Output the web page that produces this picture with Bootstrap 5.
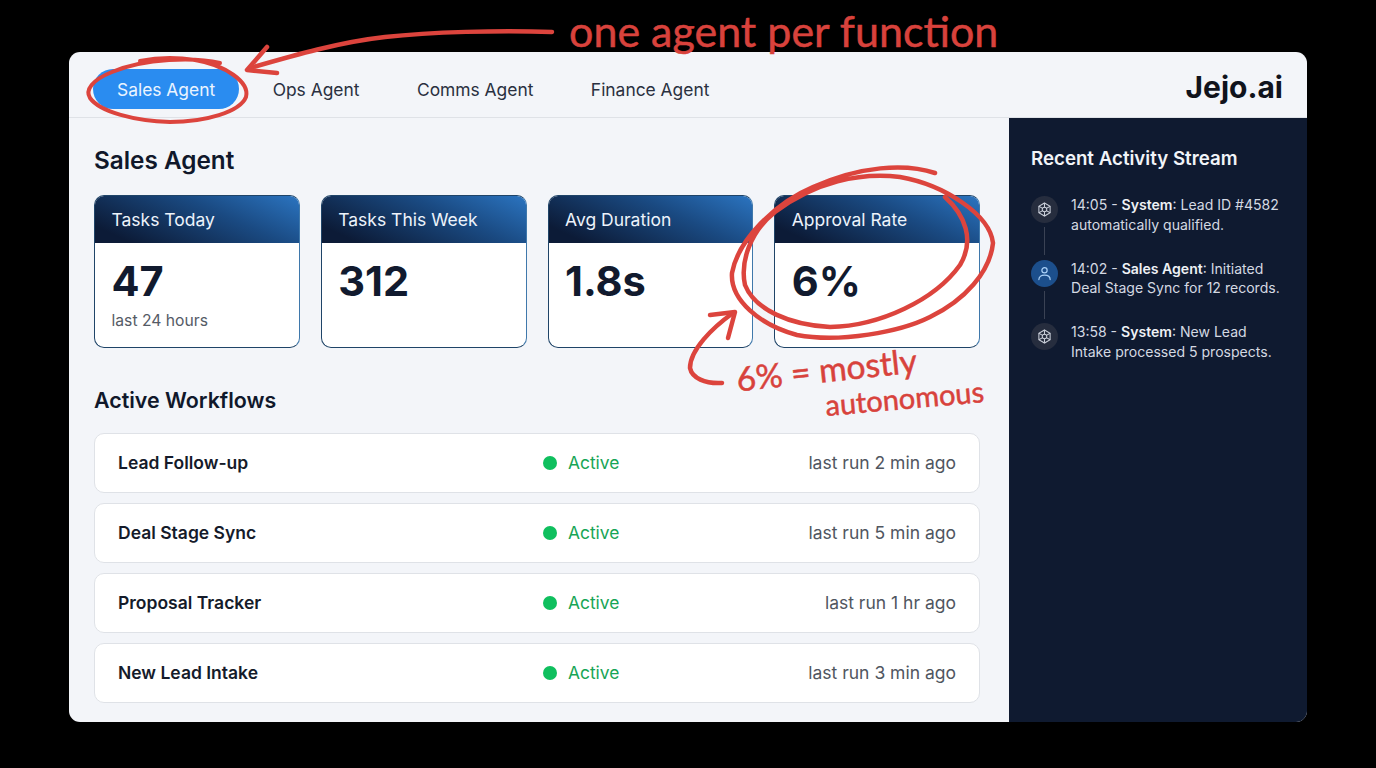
<!DOCTYPE html>
<html lang="en">
<head>
  <meta charset="UTF-8">
  <meta name="viewport" content="width=device-width, initial-scale=1">
  <title>Jejo.ai</title>
  <link href="https://cdn.jsdelivr.net/npm/bootstrap@5.3.0/dist/css/bootstrap.min.css" rel="stylesheet">
  <style>
    html, body { height: 768px; overflow: hidden; }
    body { background: #000; font-family: Inter, "Liberation Sans", sans-serif; color: #10182b; position: relative; }

    .app-panel { margin: 52px 69px 0; width: 1238px; height: 670px; background: #f3f5f9; border-radius: 11px; overflow: hidden; }
    .app-top { height: 66px; padding: 17px 24px 0; border-bottom: 1px solid #dfe2e7; }
    .app-top .nav { gap: 9.5px; }
    .app-top .nav-link { height: 40px; padding: 0 24px; line-height: 41px; font-size: 17.4px; color: #2a3040; border-radius: 20px; }
    .app-top .nav-link.active { background: #2a8cf0; color: #eaf4ff; }
    .brand-mark { font-size: 30px; font-weight: 700; line-height: 36px; color: #10131c; }

    .app-body { height: 604px; }
    .main-col { width: 940px; padding: 26px 29px 0 25px; }
    .page-title { font-size: 24.3px; font-weight: 600; line-height: 32px; margin: 0 0 19px; }
    .section-title { font-size: 21.4px; font-weight: 600; line-height: 30px; margin: 37px 0 17.5px; }

    .stat-grid { display: grid; grid-template-columns: repeat(4, 1fr); gap: 21px; }
    .stat-box { height: 153px; background: #fff; border: 1px solid #1f4468; border-right-color: #3f78ab; border-radius: 10px; overflow: hidden; }
    .stat-head { height: 47px; padding: 0 16.5px; line-height: 47px; font-size: 17.5px; color: #edf3fb; background: linear-gradient(25deg, #0c1b37 12%, #1a4a82 62%, #2b74c0 100%); }
    .stat-num { font-size: 41.5px; font-weight: 700; line-height: 52px; padding: 12px 16.5px 0; color: #111a2e; }
    .stat-note { font-size: 15.7px; line-height: 22px; padding: 3px 16.5px 0; color: #555b66; }

    .flow-list { display: flex; flex-direction: column; gap: 10px; }
    .flow-row { height: 60px; background: #fff; border: 1px solid #dfe2e7; border-radius: 10px; padding: 1px 23px 0; }
    .flow-name { font-size: 17.5px; font-weight: 600; color: #151b2a; }
    .flow-state { font-size: 17.4px; color: #17a556; padding-left: 6px; gap: 11px; }
    .flow-dot { width: 14px; height: 14px; border-radius: 50%; background: #0fbf5e; }
    .flow-time { font-size: 17.5px; color: #50565f; }

    .side-col { width: 298px; background: #0f1a30; padding: 27px 22px 0; color: #d4d9e2; }
    .side-title { font-size: 18.7px; font-weight: 600; line-height: 28px; color: #f1f4f8; margin: 0 0 22px; }
    .feed-item { display: flex; gap: 13px; height: 63.5px; font-size: 14.05px; line-height: 19.5px; }
    .feed-rail { width: 27px; flex: none; display: flex; flex-direction: column; align-items: center; padding-top: 1px; }
    .feed-icon { width: 27px; height: 27px; border-radius: 50%; background: #262d3e; display: flex; align-items: center; justify-content: center; flex: none; }
    .feed-icon.is-agent { background: #1c4f8c; }
    .feed-line { width: 1px; height: 28px; margin-top: 4px; background: #3a4254; }
    .feed-item b { font-weight: 600; color: #eef1f5; }

    .ink-layer { position: absolute; left: 0; top: 0; pointer-events: none; }
    .ink-note { position: absolute; color: #d8423c; font-family: Lato, sans-serif; white-space: nowrap; line-height: 1; -webkit-text-stroke: 0.5px #d8423c; }
    .ink-top { left: 569px; top: 9px; font-size: 43px; }
    .ink-mostly { left: 736px; top: 353px; font-size: 33.5px; transform: rotate(-6deg); }
    .ink-auto { left: 825px; top: 383px; font-size: 29px; transform: rotate(-5deg); }
  </style>
</head>
<body>
  <div class="app-panel">
    <div class="app-top d-flex justify-content-between">
      <ul class="nav">
        <li class="nav-item"><a class="nav-link active" href="#">Sales Agent</a></li>
        <li class="nav-item"><a class="nav-link" href="#">Ops Agent</a></li>
        <li class="nav-item"><a class="nav-link" href="#">Comms Agent</a></li>
        <li class="nav-item"><a class="nav-link" href="#">Finance Agent</a></li>
      </ul>
      <div class="brand-mark">Jejo.ai</div>
    </div>

    <div class="app-body d-flex">
      <div class="main-col">
        <h1 class="page-title">Sales Agent</h1>
        <div class="stat-grid">
          <div class="stat-box">
            <div class="stat-head">Tasks Today</div>
            <div class="stat-num">47</div>
            <div class="stat-note">last 24 hours</div>
          </div>
          <div class="stat-box">
            <div class="stat-head">Tasks This Week</div>
            <div class="stat-num">312</div>
          </div>
          <div class="stat-box">
            <div class="stat-head">Avg Duration</div>
            <div class="stat-num">1.8s</div>
          </div>
          <div class="stat-box">
            <div class="stat-head">Approval Rate</div>
            <div class="stat-num">6%</div>
          </div>
        </div>

        <h2 class="section-title">Active Workflows</h2>
        <div class="flow-list">
          <div class="flow-row row g-0 align-items-center">
            <div class="col-6 flow-name">Lead Follow-up</div>
            <div class="col-3 flow-state d-flex align-items-center"><span class="flow-dot"></span>Active</div>
            <div class="col-3 flow-time text-end">last run 2 min ago</div>
          </div>
          <div class="flow-row row g-0 align-items-center">
            <div class="col-6 flow-name">Deal Stage Sync</div>
            <div class="col-3 flow-state d-flex align-items-center"><span class="flow-dot"></span>Active</div>
            <div class="col-3 flow-time text-end">last run 5 min ago</div>
          </div>
          <div class="flow-row row g-0 align-items-center">
            <div class="col-6 flow-name">Proposal Tracker</div>
            <div class="col-3 flow-state d-flex align-items-center"><span class="flow-dot"></span>Active</div>
            <div class="col-3 flow-time text-end">last run 1 hr ago</div>
          </div>
          <div class="flow-row row g-0 align-items-center">
            <div class="col-6 flow-name">New Lead Intake</div>
            <div class="col-3 flow-state d-flex align-items-center"><span class="flow-dot"></span>Active</div>
            <div class="col-3 flow-time text-end">last run 3 min ago</div>
          </div>
        </div>
      </div>

      <div class="side-col">
        <h2 class="side-title">Recent Activity Stream</h2>
        <div class="feed-item">
          <div class="feed-rail">
            <span class="feed-icon">
              <svg width="15" height="15" viewBox="0 0 16 16" fill="none" stroke="#c9ced8" stroke-width="1.1"><path d="M8 1l6 3.5v7L8 15l-6-3.5v-7z"/><circle cx="8" cy="8" r="2.4"/><path d="M8 1v4.6M8 10.4V15M2 4.5l4 2.3M10 9.2l4 2.3M14 4.5l-4 2.3M6 9.2l-4 2.3"/></svg>
            </span>
            <span class="feed-line"></span>
          </div>
          <div>14:05 - <b>System</b>: Lead ID #4582 automatically qualified.</div>
        </div>
        <div class="feed-item">
          <div class="feed-rail">
            <span class="feed-icon is-agent">
              <svg width="15" height="15" viewBox="0 0 16 16" fill="none" stroke="#a9d0f7" stroke-width="1.3" stroke-linecap="round"><circle cx="8" cy="4.6" r="2.8"/><path d="M2 14.5c0-3.2 2.6-4.7 6-4.7s6 1.5 6 4.7"/></svg>
            </span>
            <span class="feed-line"></span>
          </div>
          <div>14:02 - <b>Sales Agent</b>: Initiated Deal Stage Sync for 12 records.</div>
        </div>
        <div class="feed-item">
          <div class="feed-rail">
            <span class="feed-icon">
              <svg width="15" height="15" viewBox="0 0 16 16" fill="none" stroke="#c9ced8" stroke-width="1.1"><path d="M8 1l6 3.5v7L8 15l-6-3.5v-7z"/><circle cx="8" cy="8" r="2.4"/><path d="M8 1v4.6M8 10.4V15M2 4.5l4 2.3M10 9.2l4 2.3M14 4.5l-4 2.3M6 9.2l-4 2.3"/></svg>
            </span>
          </div>
          <div>13:58 - <b>System</b>: New Lead Intake processed 5 prospects.</div>
        </div>
      </div>
    </div>
  </div>

  <!-- red marker annotations on top of the screenshot -->
  <svg class="ink-layer" width="1376" height="768" viewBox="0 0 1376 768" fill="none" stroke="#dc443d" stroke-linecap="round" stroke-linejoin="round">
    <path stroke-width="4" d="M220 63C195 57 145 58 112 72C92 80 85 90 90 98C100 112 135 121 170 122C205 122 240 112 246 97C250 82 225 65 195 60C175 57 155 58 140 61"/>
    <path stroke-width="4.5" d="M552 32C500 30 430 32 385 37C340 42 295 55 250 68"/>
    <path stroke-width="4.5" d="M267 47L247 70L277 73"/>
    <path stroke-width="4.5" d="M935 173C905 163 860 166 813 187C775 203 738 240 732 273C730 300 760 325 797 335C840 343 900 332 930 317C965 300 990 272 993 243C990 215 945 185 900 177C860 172 815 182 775 212C750 232 740 262 745 285C755 310 790 325 830 327C880 326 935 300 960 265C975 240 965 215 945 197"/>
    <path stroke-width="4.5" d="M722 383C705 384 692 378 690 368C690 350 712 328 733 313"/>
    <path stroke-width="4.5" d="M710 315L735 312L728 338"/>
  </svg>
  <span class="ink-note ink-top">one agent per function</span>
  <span class="ink-note ink-mostly">6% = mostly</span>
  <span class="ink-note ink-auto">autonomous</span>

  <script src="https://cdn.jsdelivr.net/npm/bootstrap@5.3.0/dist/js/bootstrap.bundle.min.js"></script>
</body>
</html>
